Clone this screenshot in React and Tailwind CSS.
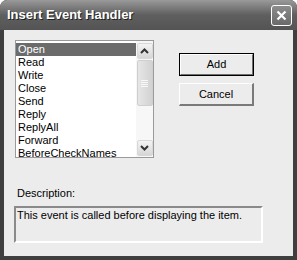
import React from 'react';

const items = ['Open', 'Read', 'Write', 'Close', 'Send', 'Reply', 'ReplyAll', 'Forward', 'BeforeCheckNames'];

const ScrollArrow = ({ up }) => (
  <div className="w-[16px] h-[16px] rounded-[2px] border border-[#d8d8d8] bg-gradient-to-b from-[#f4f4f4] to-[#d6d6d6] flex items-center justify-center">
    <svg width="9" height="6" viewBox="0 0 9 6">
      <path d={up ? 'M1 5 L4.5 1.5 L8 5' : 'M1 1 L4.5 4.5 L8 1'} fill="none" stroke="#333" strokeWidth="2" />
    </svg>
  </div>
);

const App = () => {
  return (
    <div className="w-[297px] h-[260px] bg-[#3f3f3f] rounded-t-[7px] flex flex-col overflow-hidden" style={{ fontFamily: '"Liberation Sans", Arial, sans-serif' }}>
      {/* title bar */}
      <div className="h-[30px] shrink-0 flex items-center justify-between pl-[7px] pr-[5px] bg-gradient-to-b from-[#9a9a9a] via-[#5f5f5f] to-[#545454] rounded-t-[7px]">
        <span className="text-white font-bold text-[13px] [text-shadow:1px_1px_0_#222]">Insert Event Handler</span>
        <div className="w-[21px] h-[21px] rounded-[3px] border border-white bg-gradient-to-b from-[#8c8c8c] to-[#6a6a6a] flex items-center justify-center">
          <svg width="11" height="11" viewBox="0 0 11 11">
            <path d="M1.5 1.5 L9.5 9.5 M9.5 1.5 L1.5 9.5" stroke="#fff" strokeWidth="2.2" />
          </svg>
        </div>
      </div>

      {/* client area */}
      <div className="mx-[4px] mb-[4px] flex-1 bg-[#ececec] pl-[11px] pt-[10px] text-[11px] text-black">
        <div className="flex">
          <div className="w-[139px] h-[118px] border border-[#9a9a9a] bg-white flex">
            <div className="flex-1 pt-[2px]">
              {items.map((it, i) => (
                <div key={it} className={`h-[13px] leading-[13px] pl-[2px] ${i === 0 ? 'bg-[#6b6b6b] text-white' : ''}`}>{it}</div>
              ))}
            </div>
            <div className="w-[17px] bg-[#f7f7f7] flex flex-col items-center pt-[2px] pb-[1px]">
              <ScrollArrow up />
              <div className="mt-[1px] w-[16px] h-[46px] rounded-[2px] border border-[#cfcfcf] bg-gradient-to-r from-[#e6e6e6] to-[#d2d2d2] flex flex-col items-center justify-center gap-[1px]">
                <div className="w-[7px] h-[1px] bg-[#f8f8f8]" />
                <div className="w-[7px] h-[1px] bg-[#f8f8f8]" />
                <div className="w-[7px] h-[1px] bg-[#f8f8f8]" />
                <div className="w-[7px] h-[1px] bg-[#f8f8f8]" />
              </div>
              <div className="flex-1" />
              <ScrollArrow />
            </div>
          </div>

          <div className="ml-[25px] mt-[13px] flex flex-col gap-[7px]">
            <div className="w-[75px] h-[23px] border border-black">
              <div className="w-full h-full border-t border-l border-white border-b border-r border-b-[#6e6e6e] border-r-[#6e6e6e] bg-[#ececec] flex items-center justify-center">Add</div>
            </div>
            <div className="w-[75px] h-[23px] border-t border-l border-white border-b-2 border-r-2 border-b-[#7a7a7a] border-r-[#7a7a7a] bg-[#ececec] flex items-center justify-center">Cancel</div>
          </div>
        </div>

        <div className="mt-[29px] pl-[2px] leading-[13px]">Description:</div>
        <div className="mt-[6px] -ml-[1px] w-[249px] h-[37px] border-t-2 border-l-2 border-b-2 border-r-2 border-t-[#8a8a8a] border-l-[#8a8a8a] border-b-white border-r-white bg-[#ececec] pl-[1px] pt-[1px] leading-[13px]">
          This event is called before displaying the item.
        </div>
      </div>
    </div>
  );
};

export default App;
